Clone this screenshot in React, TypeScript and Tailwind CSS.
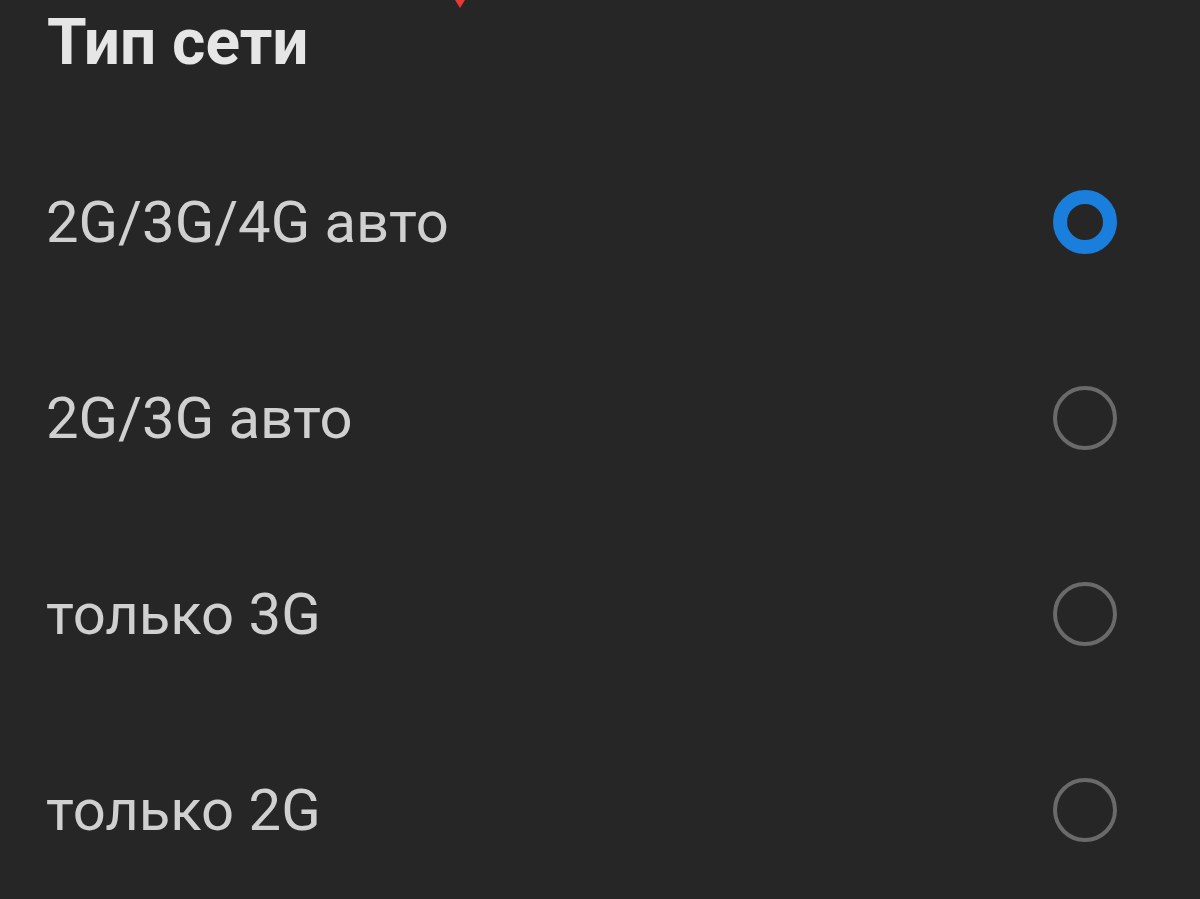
import React from "react";

const options = [
  { label: "2G/3G/4G авто", selected: true },
  { label: "2G/3G авто", selected: false },
  { label: "только 3G", selected: false },
  { label: "только 2G", selected: false },
];

function Radio({ selected }: { selected: boolean }) {
  if (selected) {
    return (
      <div className="w-[64px] h-[64px] rounded-full border-[14px] border-[#1a7fdc] box-border shrink-0" />
    );
  }
  return (
    <div className="w-[64px] h-[64px] rounded-full border-[4px] border-[#6a6a6a] box-border shrink-0" />
  );
}

export default function App() {
  return (
    <div
      className="relative w-[1200px] h-[899px] overflow-hidden bg-[#262626]"
      style={{ fontFamily: "Roboto, 'Noto Sans', sans-serif" }}
    >
      <svg className="absolute left-[454px] top-0" width="12" height="9" viewBox="0 0 12 9">
        <polygon points="1,0 11,0 6,8" fill="#e53935" />
      </svg>
      <div className="pl-[47px] pt-[11px] h-[124px]">
        <div className="text-[64px] leading-[64px] font-bold text-[#e6e6e6]">Тип сети</div>
      </div>
      <div className="flex flex-col">
        {options.map((o) => (
          <div key={o.label} className="flex items-center justify-between h-[196px] pl-[46px] pr-[83px]">
            <span className="text-[58px] leading-[58px] text-[#d0d0d0]">{o.label}</span>
            <Radio selected={o.selected} />
          </div>
        ))}
      </div>
    </div>
  );
}
